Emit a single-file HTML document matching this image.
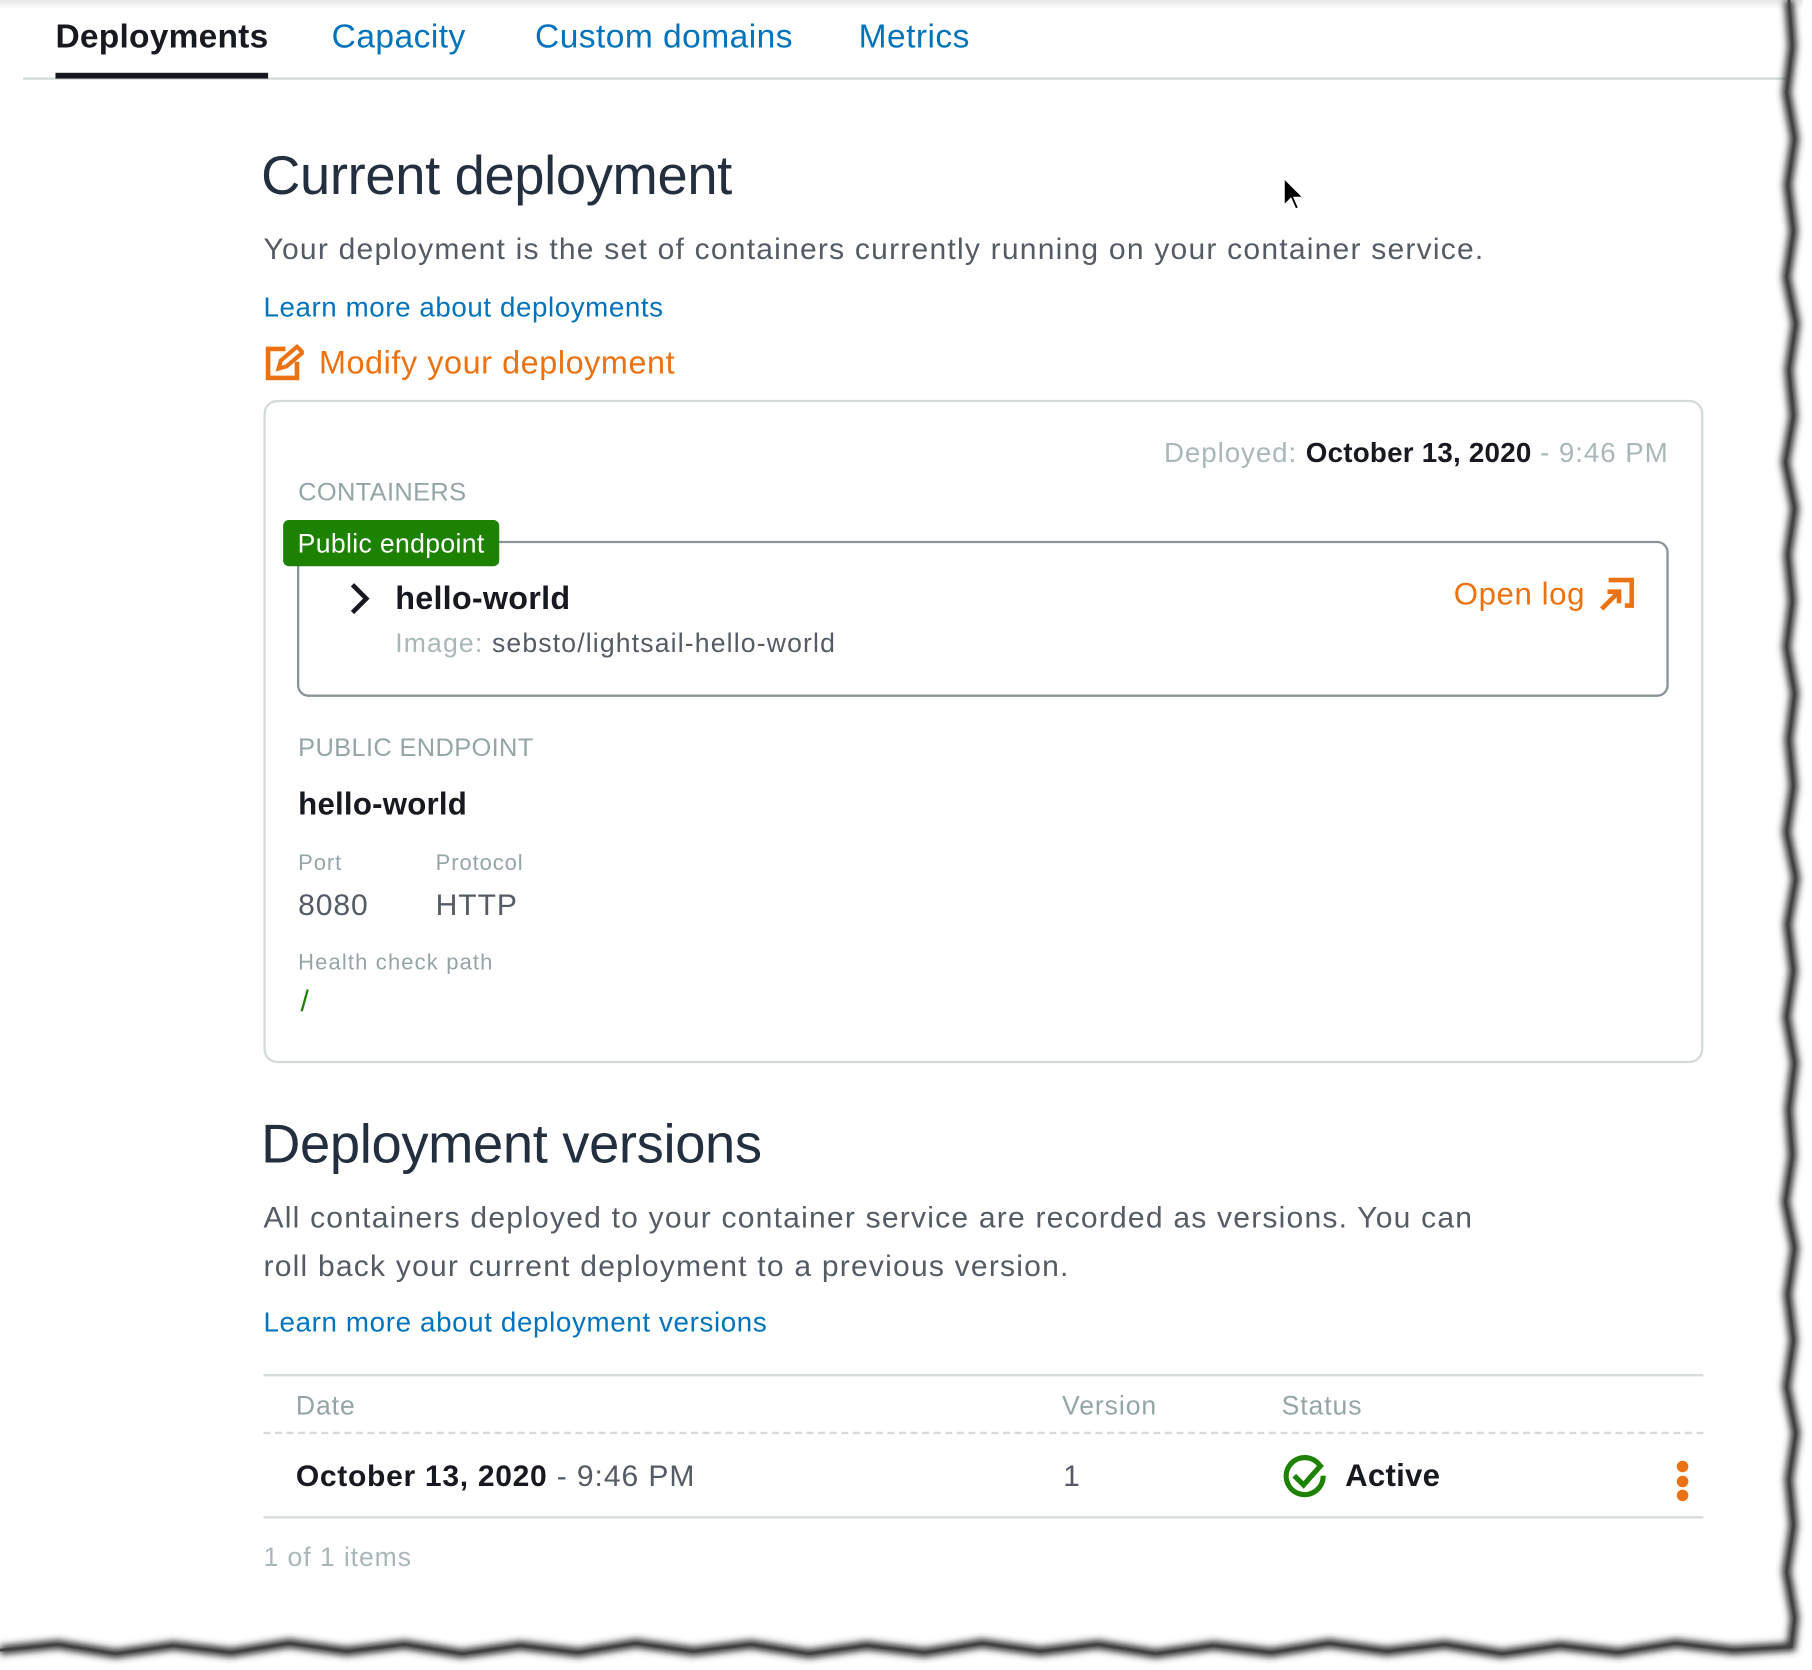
<!DOCTYPE html>
<html><head><meta charset="utf-8"><style>
html,body{margin:0;padding:0;background:#fff;width:1812px;height:1670px;overflow:hidden}
#s{position:absolute;left:0;top:0;width:1568px;height:1445px;transform:scale(1.15561);transform-origin:0 0;font-family:"Liberation Sans",sans-serif;letter-spacing:0.8px}
.a{position:absolute;white-space:nowrap}
.tab{font-size:29px;top:16px;color:#0073bb;letter-spacing:0.4px}
.g{color:#879596}
.b{font-weight:bold;color:#16191f;letter-spacing:0.2px}
</style></head><body><div id="s">
<div style="position:absolute;left:0;top:0;width:1560px;height:8px;background:linear-gradient(#e6e6e6,#fff)"></div>
<div class="a tab b" style="left:48px">Deployments</div>
<div class="a tab" style="left:287px">Capacity</div>
<div class="a tab" style="left:463px">Custom domains</div>
<div class="a tab" style="left:743px">Metrics</div>
<div style="position:absolute;left:20px;top:67px;width:1528px;height:2px;background:#d5dbdb"></div>
<div style="position:absolute;left:48px;top:63px;width:184px;height:5px;background:#16191f"></div>

<div class="a" style="left:226px;top:124px;font-size:47px;color:#232f3e;letter-spacing:-0.3px">Current deployment</div>
<div class="a" style="left:228px;top:200px;font-size:26px;color:#545b64;letter-spacing:1.05px">Your deployment is the set of containers currently running on your container service.</div>
<div class="a" style="left:228px;top:253px;font-size:24px;color:#0073bb;letter-spacing:0.5px">Learn more about deployments</div>
<svg class="a" style="left:229px;top:298px" width="34" height="32" viewBox="0 0 34 32"><path d="M18 4H3v25h25V15" fill="none" stroke="#ec7211" stroke-width="4"/><path d="M12 21l2-7 14-12 5 5-14 12z" fill="none" stroke="#ec7211" stroke-width="3.5"/></svg>
<div class="a" style="left:276px;top:298px;font-size:28px;color:#ec7211;letter-spacing:0.5px">Modify your deployment</div>
<svg class="a" style="left:1105px;top:150px" width="24" height="34"><path d="M6 4v24l6-6 4 9 3-1-4-9h8z" fill="#000" stroke="#fff" stroke-width="1.5"/></svg>

<div style="position:absolute;left:228px;top:346px;width:1242px;height:570px;border:2px solid #d5dbdb;border-radius:12px"></div>
<div class="a" style="right:124px;top:379px;font-size:24px;color:#aab7b8">Deployed: <span class="b">October 13, 2020</span> - 9:46 PM</div>
<div class="a g" style="left:258px;top:413px;font-size:22px;color:#95a5a6;letter-spacing:0.3px">CONTAINERS</div>
<div style="position:absolute;left:257px;top:468px;width:1183px;height:131px;border:2px solid #879596;border-radius:10px"></div>
<div class="a" style="left:245px;top:450px;width:187px;height:40px;background:#1d8102;border-radius:5px;color:#fff;font-size:23px;line-height:40px;text-align:center;letter-spacing:0.3px">Public endpoint</div>
<svg class="a" style="left:300px;top:503px" width="24" height="30"><path d="M5 3l12 12-12 12" fill="none" stroke="#16191f" stroke-width="4"/></svg>
<div class="a b" style="left:342px;top:502px;font-size:28px">hello-world</div>
<div class="a" style="left:342px;top:543px;font-size:23px;color:#545b64;letter-spacing:1px"><span style="color:#aab7b8">Image:</span> sebsto/lightsail-hello-world</div>
<div class="a" style="left:1258px;top:499px;font-size:27px;color:#ec7211;letter-spacing:0.5px">Open log</div>
<svg class="a" style="left:1382px;top:499px" width="34" height="32"><path d="M12 5V3h18v22h-6" fill="none" stroke="#ec7211" stroke-width="4"/><path d="M4 28L18 14M9 13h10v10" fill="none" stroke="#ec7211" stroke-width="4"/></svg>

<div class="a" style="left:258px;top:634px;font-size:22px;color:#95a5a6;letter-spacing:0.3px">PUBLIC ENDPOINT</div>
<div class="a b" style="left:258px;top:681px;font-size:27px">hello-world</div>
<div class="a" style="left:258px;top:737px;font-size:19px;color:#95a5a6">Port</div>
<div class="a" style="left:377px;top:737px;font-size:19px;color:#95a5a6">Protocol</div>
<div class="a" style="left:258px;top:768px;font-size:26px;color:#545b64">8080</div>
<div class="a" style="left:377px;top:768px;font-size:26px;color:#545b64">HTTP</div>
<div class="a" style="left:258px;top:823px;font-size:19px;color:#95a5a6;letter-spacing:1px">Health check path</div>
<div class="a" style="left:260px;top:851px;font-size:26px;color:#1d8102">/</div>

<div class="a" style="left:226px;top:962px;font-size:47px;color:#232f3e;letter-spacing:-0.3px">Deployment versions</div>
<div class="a" style="left:228px;top:1032px;font-size:26px;color:#545b64;line-height:42px;white-space:normal;width:1070px;letter-spacing:1.05px">All containers deployed to your container service are recorded as versions. You can roll back your current deployment to a previous version.</div>
<div class="a" style="left:228px;top:1131px;font-size:24px;color:#0073bb;letter-spacing:0.55px">Learn more about deployment versions</div>
<div style="position:absolute;left:228px;top:1189px;width:1246px;height:2px;background:#d5dbdb"></div>
<div class="a" style="left:256px;top:1203px;font-size:23px;color:#95a5a6">Date</div>
<div class="a" style="left:919px;top:1203px;font-size:23px;color:#95a5a6">Version</div>
<div class="a" style="left:1109px;top:1203px;font-size:23px;color:#95a5a6">Status</div>
<div style="position:absolute;left:228px;top:1239px;width:1246px;border-top:2px dashed #d5dbdb"></div>
<div class="a" style="left:256px;top:1262px;font-size:26px;color:#545b64"><span class="b" style="letter-spacing:0.6px">October 13, 2020</span> - 9:46 PM</div>
<div class="a" style="left:920px;top:1262px;font-size:26px;color:#545b64">1</div>
<svg class="a" style="left:1110px;top:1259px" width="40" height="38"><path d="M32 9A16 16 0 1 0 35 18" fill="none" stroke="#1d8102" stroke-width="4.5"/><path d="M10 18l8 8 16-18" fill="none" stroke="#1d8102" stroke-width="4.5"/></svg>
<div class="a b" style="left:1164px;top:1262px;font-size:27px">Active</div>
<div style="position:absolute;left:1451px;top:1264px;width:10px;height:10px;border-radius:50%;background:#ec7211"></div>
<div style="position:absolute;left:1451px;top:1277px;width:10px;height:10px;border-radius:50%;background:#ec7211"></div>
<div style="position:absolute;left:1451px;top:1289px;width:10px;height:10px;border-radius:50%;background:#ec7211"></div>
<div style="position:absolute;left:228px;top:1312px;width:1246px;height:2px;background:#d5dbdb"></div>
<div class="a" style="left:228px;top:1334px;font-size:23px;color:#aab7b8">1 of 1 items</div>

<svg style="position:absolute;left:0;top:0" width="1568" height="1445">
<defs><filter id="f"><feGaussianBlur stdDeviation="3"/></filter></defs>
<path filter="url(#f)" d="M1548 0L1551 40L1546 80L1553 120L1547 160L1552 200L1546 240L1554 280L1548 320L1552 360L1545 400L1553 440L1547 480L1551 520L1546 560L1553 600L1548 640L1552 680L1546 720L1554 760L1547 800L1552 840L1546 880L1553 920L1548 960L1551 1000L1545 1040L1553 1080L1547 1120L1552 1160L1546 1200L1554 1240L1548 1280L1552 1320L1546 1360L1553 1400L1550 1425L1500 1428L1450 1422L1400 1430L1350 1424L1300 1431L1250 1423L1200 1429L1150 1422L1100 1430L1050 1424L1000 1431L950 1423L900 1429L850 1422L800 1430L750 1424L700 1431L650 1423L600 1429L550 1422L500 1430L450 1424L400 1431L350 1423L300 1429L250 1422L200 1430L150 1424L100 1431L50 1423L0 1428" fill="none" stroke="#333" stroke-width="8"/>
<path d="M1548 0L1551 40L1546 80L1553 120L1547 160L1552 200L1546 240L1554 280L1548 320L1552 360L1545 400L1553 440L1547 480L1551 520L1546 560L1553 600L1548 640L1552 680L1546 720L1554 760L1547 800L1552 840L1546 880L1553 920L1548 960L1551 1000L1545 1040L1553 1080L1547 1120L1552 1160L1546 1200L1554 1240L1548 1280L1552 1320L1546 1360L1553 1400L1550 1425L1500 1428L1450 1422L1400 1430L1350 1424L1300 1431L1250 1423L1200 1429L1150 1422L1100 1430L1050 1424L1000 1431L950 1423L900 1429L850 1422L800 1430L750 1424L700 1431L650 1423L600 1429L550 1422L500 1430L450 1424L400 1431L350 1423L300 1429L250 1422L200 1430L150 1424L100 1431L50 1423L0 1428" fill="none" stroke="#444" stroke-width="2.5"/>
</svg>
</div></body></html>
